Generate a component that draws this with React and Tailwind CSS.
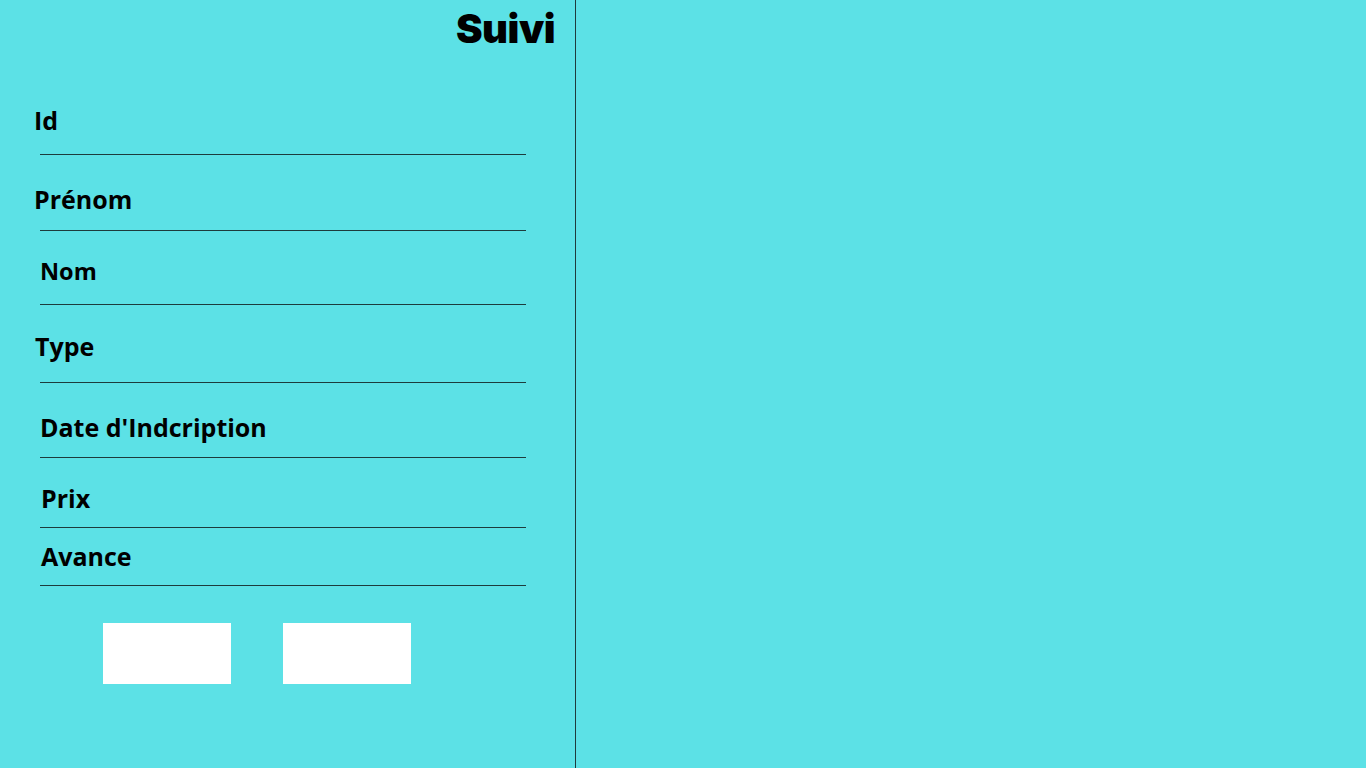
const fields = [
  { label: 'Id', mt: 'mt-[105px]', gap: 'mt-[19px]', ml: 'ml-[34px]', size: 'text-[25px]' },
  { label: 'Prénom', mt: 'mt-[29px]', gap: 'mt-[16px]', ml: 'ml-[34px]', size: 'text-[25px]' },
  { label: 'Nom', mt: 'mt-[25px]', gap: 'mt-[18px]', ml: 'ml-[40px]', size: 'text-[23.5px]' },
  { label: 'Type', mt: 'mt-[26px]', gap: 'mt-[21px]', ml: 'ml-[35px]', size: 'text-[25px]' },
  { label: "Date d'Indcription", mt: 'mt-[29px]', gap: 'mt-[15px]', ml: 'ml-[40px]', size: 'text-[25px]' },
  { label: 'Prix', mt: 'mt-[25px]', gap: 'mt-[14px]', ml: 'ml-[41px]', size: 'text-[25px]' },
  { label: 'Avance', mt: 'mt-[13px]', gap: 'mt-[14px]', ml: 'ml-[41px]', size: 'text-[25px]' },
];

export default function App() {
  return (
    <div className="flex h-[768px] w-[1366px] overflow-hidden bg-[#5ce1e6] font-['Open_Sans',sans-serif] text-black">
      {/* formulaire */}
      <div className="relative w-[576px] shrink-0 border-r border-[#1f3a3c]">
        <h1 className="absolute right-[20px] top-[3px] font-['Inter',sans-serif] text-[40px] font-black leading-[52px] tracking-[-0.5px]">
          Suivi
        </h1>
        {fields.map((f) => (
          <div key={f.label} className={f.mt}>
            <div className={`${f.ml} ${f.size} h-[30px] font-bold leading-[30px]`}>{f.label}</div>
            <div className={`${f.gap} mx-[40px] w-[486px] border-t border-[#1d3b3d]`} />
          </div>
        ))}
        <div className="mt-[37px] flex gap-[52px] pl-[103px]">
          <button className="h-[61px] w-[128px] bg-white" />
          <button className="h-[61px] w-[128px] bg-white" />
        </div>
      </div>
      <div className="flex-1" />
    </div>
  );
}
